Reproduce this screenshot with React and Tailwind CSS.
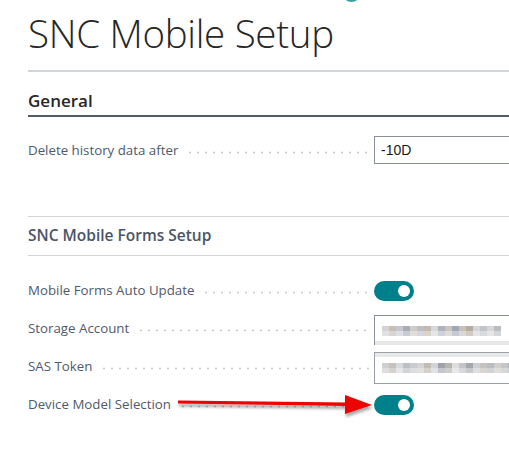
import React from "react";

const blurA = [
  ["#d4d4d6","#c9bfb5","#c4c8ce","#a9adb6","#d0cdc8","#bcc0c6","#c3b9ae","#d8d8da","#aeb4be","#cbc5bd","#9fa8b6","#c6c1ba","#b6ab9f","#d4d5d8","#c1c4ca","#d8d6d4","#b8bcc3"],
  ["#e2e2e4","#d8d4cf","#dcdfe3","#c9ccd2","#e0dedb","#d3d6da","#dad4cd","#e6e6e8","#cfd3d9","#e0dcd7","#c6cbd3","#dcd9d5","#d2cbc3","#e4e5e7","#d8dadd","#e6e5e3","#d4d6da"],
];
const blurB = [
  ["#cfcfd1","#c7c2bc","#d9d9db","#bdbfc4","#cacbce","#d6d4d0","#c0bcb6","#d2d3d6","#9ea3ab","#b8b6b3","#dedede","#c2c4c9","#a6a7ac","#cdcfd2","#c6c2bd","#b9bcc2","#d1cfcc","#c3c6cb","#b0b2b6","#c7c8cb"],
  ["#dedede","#d6d3ce","#e6e6e8","#d2d4d8","#dcdddf","#e3e1de","#d4d0ca","#e0e1e3","#c3c7cd","#d0ceca","#e8e8e8","#d6d8dc","#c8c9cd","#dedfe1","#d9d6d2","#d0d2d6","#e0dedb","#d6d8dc","#cacbcf","#d9dadc"],
];

function Blurred({ rows }) {
  return (
    <div className="flex flex-col pl-[7px] blur-[0.7px]">
      {rows.map((r, j) => (
        <div key={j} className="flex">
          {r.map((c, i) => (
            <div key={i} className="w-[7px] h-[5px] shrink-0" style={{ background: c }} />
          ))}
        </div>
      ))}
    </div>
  );
}

function Leader() {
  return (
    <div className="flex-1 ml-[8px] mr-[5px] h-[3px] mt-[3px] bg-[radial-gradient(circle,#c4c8cc_0.9px,transparent_1.2px)] bg-[length:8px_3px]" />
  );
}

function Label({ children }) {
  return <span className="text-[13.3px] text-[#4f5a6b] whitespace-nowrap">{children}</span>;
}

function Toggle() {
  return (
    <div className="w-[40px] h-[20px] rounded-full bg-[#00808a] flex items-center justify-end pr-[4px]">
      <div className="w-[12px] h-[12px] rounded-full bg-white" />
    </div>
  );
}

function Row({ label, children }) {
  return (
    <div className="flex items-center h-[38px]">
      <div className="w-[346px] shrink-0 flex items-center">
        <Label>{label}</Label>
        <Leader />
      </div>
      <div className="flex-1 min-w-0">{children}</div>
    </div>
  );
}

export default function App() {
  return (
    <div className="relative w-[509px] h-[453px] bg-white overflow-hidden font-['Open_Sans','Noto_Sans',sans-serif]">
      <div className="absolute left-[342px] top-[-17px] w-[19px] h-[19px] rounded-full border-2 border-[#3aa0a8]" />
      <div className="pl-[28px]">
        <div className="h-[70px] pt-[10px]">
          <h1 className="text-[38.5px] leading-[46px] font-light text-[#262626] tracking-[-0.3px]">SNC Mobile Setup</h1>
        </div>
        <div className="h-[2px] bg-[#d2d5d8]" />
        <div className="h-[43px] flex items-end pb-[3px]">
          <h2 className="text-[17px] leading-[22px] font-semibold text-[#262626]">General</h2>
        </div>
        <div className="h-[2px] bg-[#505a69]" />
        <div className="mt-[19px] flex items-center h-[28px]">
          <div className="w-[346px] shrink-0 flex items-center pt-[2px]">
            <Label>Delete history data after</Label>
            <Leader />
          </div>
          <div className="flex-1 min-w-0 h-[28px] border border-[#8a919b] border-r-0 flex items-center pl-[6px] font-['Liberation_Sans',sans-serif] text-[14px] text-[#1a1a1a]">
            -10D
          </div>
        </div>
        <div className="mt-[52px] h-[1px] bg-[#d2d5d8]" />
        <div className="h-[38px] flex items-center">
          <h2 className="text-[15.5px] font-semibold text-[#4a5566]">SNC Mobile Forms Setup</h2>
        </div>
        <div className="h-[1px] bg-[#d2d5d8]" />
        <div className="mt-[16px]">
          <Row label="Mobile Forms Auto Update">
            <Toggle />
          </Row>
          <Row label="Storage Account">
            <div className="h-[30px] mt-[2px] border-t border-l border-[#8a919b] bg-[linear-gradient(to_bottom,#ffffff_85%,#e6e7e9_85%)] flex items-center overflow-hidden">
              <Blurred rows={blurA} />
            </div>
          </Row>
          <Row label="SAS Token">
            <div className="h-[32px] mt-[2px] border border-r-0 border-[#9aa0a8] bg-[linear-gradient(to_bottom,#e8e9eb_12%,#ffffff_12%)] flex items-center overflow-hidden">
              <Blurred rows={blurB} />
            </div>
          </Row>
          <Row label="Device Model Selection">
            <Toggle />
          </Row>
        </div>
      </div>
      <svg className="absolute left-0 top-0" width="509" height="453" viewBox="0 0 509 453">
        <defs>
          <filter id="sh" x="-10%" y="-50%" width="120%" height="200%">
            <feDropShadow dx="1" dy="3" stdDeviation="1.5" floodColor="#000" floodOpacity="0.35" />
          </filter>
        </defs>
        <g filter="url(#sh)">
          <path d="M178 400.5 L348 402.5 L348 406 L178 403.5 Z" fill="#f00000" />
          <path d="M345 395 L372 405 L345 414 Z" fill="#f00000" />
        </g>
      </svg>
    </div>
  );
}
